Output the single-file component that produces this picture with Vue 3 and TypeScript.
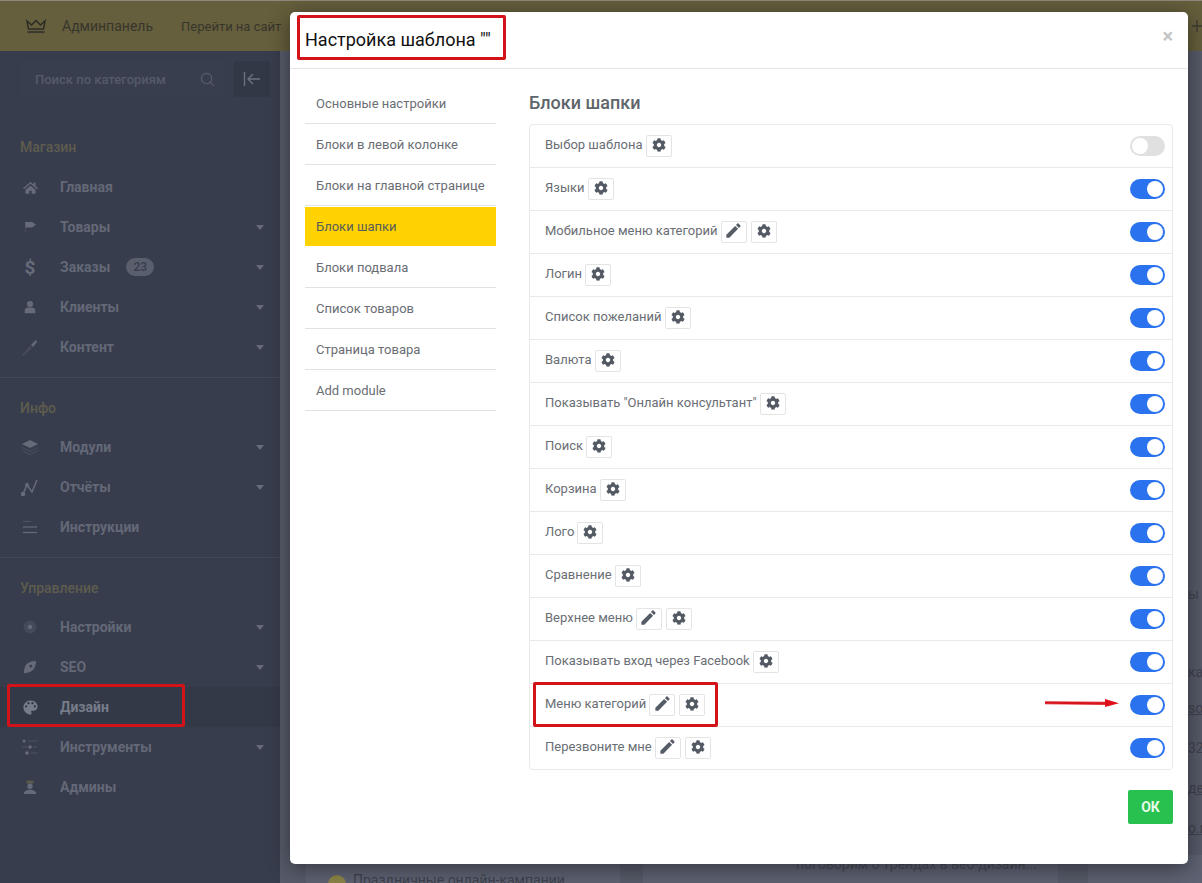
<script setup lang="ts">
interface NavItem { label: string; icon: string; caret?: boolean; badge?: string; active?: boolean }
interface NavGroup { title: string; items: NavItem[] }
interface Row { label: string; edit?: boolean; on: boolean }

const groups: NavGroup[] = [
  { title: 'Магазин', items: [
    { label: 'Главная', icon: 'home' },
    { label: 'Товары', icon: 'flag', caret: true },
    { label: 'Заказы', icon: 'dollar', caret: true, badge: '23' },
    { label: 'Клиенты', icon: 'user', caret: true },
    { label: 'Контент', icon: 'pen', caret: true },
  ] },
  { title: 'Инфо', items: [
    { label: 'Модули', icon: 'layers', caret: true },
    { label: 'Отчёты', icon: 'chart', caret: true },
    { label: 'Инструкции', icon: 'bars' },
  ] },
  { title: 'Управление', items: [
    { label: 'Настройки', icon: 'gear', caret: true },
    { label: 'SEO', icon: 'tag', caret: true },
    { label: 'Дизайн', icon: 'palette', active: true },
    { label: 'Инструменты', icon: 'tools', caret: true },
    { label: 'Админы', icon: 'admin' },
  ] },
]

const tabs = ['Основные настройки', 'Блоки в левой колонке', 'Блоки на главной странице', 'Блоки шапки', 'Блоки подвала', 'Список товаров', 'Страница товара', 'Add module']

const rows: Row[] = [
  { label: 'Выбор шаблона', on: false },
  { label: 'Языки', on: true },
  { label: 'Мобильное меню категорий', edit: true, on: true },
  { label: 'Логин', on: true },
  { label: 'Список пожеланий', on: true },
  { label: 'Валюта', on: true },
  { label: 'Показывать "Онлайн консультант"', on: true },
  { label: 'Поиск', on: true },
  { label: 'Корзина', on: true },
  { label: 'Лого', on: true },
  { label: 'Сравнение', on: true },
  { label: 'Верхнее меню', edit: true, on: true },
  { label: 'Показывать вход через Facebook', on: true },
  { label: 'Меню категорий', edit: true, on: true },
  { label: 'Перезвоните мне', edit: true, on: true },
]

const gearPath = 'M487.4 315.7l-42.6-24.6c4.3-23.2 4.3-47 0-70.2l42.6-24.6c4.9-2.8 7.1-8.6 5.5-14-11.1-35.6-30-67.8-54.7-94.6-3.8-4.1-10-5.1-14.8-2.3L380.8 110c-17.9-15.4-38.5-27.3-60.8-35.1V25.8c0-5.6-3.9-10.5-9.4-11.7-36.7-8.2-74.3-7.8-109.2 0-5.5 1.2-9.4 6.1-9.4 11.7V75c-22.2 7.9-42.8 19.8-60.8 35.1L88.7 85.5c-4.9-2.8-11-1.9-14.8 2.3-24.7 26.7-43.6 58.9-54.7 94.6-1.7 5.4.6 11.2 5.5 14L67.3 221c-4.3 23.2-4.3 47 0 70.2l-42.6 24.6c-4.9 2.8-7.1 8.6-5.5 14 11.1 35.6 30 67.8 54.7 94.6 3.8 4.1 10 5.1 14.8 2.3l42.6-24.6c17.9 15.4 38.5 27.3 60.8 35.1v49.2c0 5.6 3.9 10.5 9.4 11.7 36.7 8.2 74.3 7.8 109.2 0 5.5-1.2 9.4-6.1 9.4-11.7v-49.2c22.2-7.9 42.8-19.8 60.8-35.1l42.6 24.6c4.9 2.8 11 1.9 14.8-2.3 24.7-26.7 43.6-58.9 54.7-94.6 1.5-5.5-.7-11.3-5.6-14.1zM256 336c-44.1 0-80-35.9-80-80s35.9-80 80-80 80 35.9 80 80-35.9 80-80 80z'
const penPath = 'M3 17.25V21h3.75L17.81 9.94l-3.75-3.75L3 17.25zM20.71 7.04a1 1 0 0 0 0-1.41l-2.34-2.34a1 1 0 0 0-1.41 0l-1.83 1.83 3.75 3.75 1.83-1.83z'
</script>

<template>
  <div class="page">
    <header class="topbar">
      <svg class="crown" viewBox="0 0 20 14" width="20" height="14" fill="none" stroke="#2c2c28" stroke-width="1.5">
        <path d="M1 2l4.5 4L10 1.5 14.500 6 19 2l-1.500 8h-15z" />
        <path d="M1.500 13h17" />
      </svg>
      <span class="brand">Админпанель</span>
      <span class="toplink">Перейти на сайт</span>
      <svg class="plus" viewBox="0 0 12 12" width="12" height="12" fill="none" stroke="#3d3c30" stroke-width="1.4">
        <path d="M5 0v12M0 6h12" />
      </svg>
    </header>

    <div class="body">
      <aside class="sidebar">
        <div class="searchrow">
          <div class="search">
            <span>Поиск по категориям</span>
            <svg viewBox="0 0 16 16" width="15" height="15" fill="none" stroke="#585d6c" stroke-width="1.200">
              <circle cx="7" cy="7" r="5.500" />
              <path d="M11 11l4 4" />
            </svg>
          </div>
          <div class="collapse">
            <svg viewBox="0 0 18 16" width="18" height="16" fill="none" stroke="#6c7180" stroke-width="1.400">
              <path d="M1.500 1v14M17 8H5M10 3L5 8l5 5" />
            </svg>
          </div>
        </div>

        <section v-for="(g, gi) in groups" :key="g.title" class="group" :class="{ last: gi === groups.length - 1 }">
          <h4 class="gtitle">{{ g.title }}</h4>
          <div v-for="it in g.items" :key="it.label" class="nav" :class="{ active: it.active }">
            <span class="ico">
              <svg v-if="it.icon === 'home'" viewBox="0 0 24 24" width="15" height="15" fill="#666b7a"><path d="M12 3L0 13l1.500 1.800L12 6l10.500 8.800L24 13l-4-3.300V4h-3v3.200zM4 15.500V22h6v-5h4v5h6v-6.500L12 9z" /></svg>
              <svg v-else-if="it.icon === 'flag'" viewBox="0 0 16 16" width="16" height="16"><path d="M3 3h7l4 2.500L10 8.500H4.500L3.500 9z" fill="#666b7a" /><path d="M3.500 9v5" stroke="#454a5a" fill="none" /></svg>
              <span v-else-if="it.icon === 'dollar'" class="dollar">$</span>
              <svg v-else-if="it.icon === 'user'" viewBox="0 0 16 16" width="14" height="14" fill="#666b7a"><circle cx="8" cy="4.500" r="3.500" /><path d="M2 15v-3c0-2 1.500-3.500 3.500-3.500h5c2 0 3.500 1.500 3.500 3.500v3z" /></svg>
              <svg v-else-if="it.icon === 'pen'" viewBox="0 0 18 18" width="18" height="18"><path d="M1 17l8-9 2 2-9 8z" fill="#474c5b" /><path d="M10 7l5-5 1 2-4 5z" fill="#666b7a" /></svg>
              <svg v-else-if="it.icon === 'layers'" viewBox="0 0 18 16" width="18" height="16"><path d="M9 1l8 4-8 4-8-4z" fill="#666b7a" /><path d="M1 8.500l8 4 8-4M1 11.500l8 4 8-4" fill="none" stroke="#4b5060" /></svg>
              <svg v-else-if="it.icon === 'chart'" viewBox="0 0 18 18" width="18" height="18" fill="none" stroke="#666b7a" stroke-width="1.500"><path d="M2 16l4-9 5 7 5-12" /><circle cx="2" cy="16" r="1.500" fill="#666b7a" /><circle cx="6" cy="7" r="1.200" fill="#666b7a" /></svg>
              <svg v-else-if="it.icon === 'bars'" viewBox="0 0 16 14" width="16" height="14" fill="none" stroke-width="1.200"><path d="M1 1.500h8" stroke="#4d5261" /><path d="M1 7h14" stroke="#666b7a" /><path d="M1 12.500h14" stroke="#666b7a" /></svg>
              <svg v-else-if="it.icon === 'gear'" viewBox="0 0 16 16" width="16" height="16"><circle cx="8" cy="8" r="6.500" fill="#454a5a" /><circle cx="8" cy="8" r="2.200" fill="#666b7a" /></svg>
              <svg v-else-if="it.icon === 'tag'" viewBox="0 0 16 16" width="14" height="14"><path d="M15 1c-6 0-10 2-12 5-1 2-2 6-2 9 3 0 7-1 9-2.500C13 10 15 6 15 1z" fill="#666b7a" /><circle cx="9" cy="7" r="1.500" fill="#383d4d" /></svg>
              <svg v-else-if="it.icon === 'palette'" viewBox="0 0 24 24" width="19" height="19" fill="#777c8a"><path d="M12 3a9 9 0 0 0 0 18c.83 0 1.500-.67 1.500-1.500 0-.39-.15-.74-.39-1.010-.23-.26-.38-.61-.38-.99 0-.83.67-1.500 1.500-1.500H16c2.760 0 5-2.240 5-5 0-4.420-4.030-8-9-8zm-5.500 9a1.500 1.500 0 1 1 0-3 1.500 1.500 0 0 1 0 3zm3-4a1.500 1.500 0 1 1 0-3 1.500 1.500 0 0 1 0 3zm5 0a1.500 1.500 0 1 1 0-3 1.500 1.500 0 0 1 0 3zm3 4a1.500 1.500 0 1 1 0-3 1.500 1.500 0 0 1 0 3z" /></svg>
              <svg v-else-if="it.icon === 'tools'" viewBox="0 0 18 18" width="18" height="18" fill="#666b7a"><circle cx="3" cy="3" r="1.500" /><circle cx="9" cy="9" r="1.800" /><circle cx="6" cy="15" r="1.800" /><path d="M7 2.500h9v1H7zM1 8.500h5v1H1zM12 8.500h4v1h-4zM10 14.500h6v1h-6z" opacity=".45" /></svg>
              <svg v-else viewBox="0 0 16 18" width="14" height="16"><path d="M4 1l2 1.500L8 1l2 1.500L12 1v4H4z" fill="#5d5c4c" /><circle cx="8" cy="8" r="3" fill="#666b7a" /><path d="M1 17c0-3 3-5 7-5s7 2 7 5z" fill="#666b7a" /></svg>
            </span>
            <span class="navlabel">{{ it.label }}</span>
            <span v-if="it.badge" class="badge">{{ it.badge }}</span>
            <span v-if="it.caret" class="caret"></span>
          </div>
        </section>
      </aside>

      <main class="content">
        <div class="bgcards">
          <div class="bgleft">
            <span class="dot"></span>
            <span class="bgline">Праздничные онлайн-кампании</span>
          </div>
          <div class="bgright">поговорим о трендах в веб-дизайн...</div>
          <div class="bgthird"></div>
        </div>
        <div class="edge">
          <span class="e0">ы</span><span class="e1">ка</span><u>so</u><span>32</span><u>де</u><u>o.r</u>
        </div>
      </main>
    </div>

    <div class="modal">
      <div class="mhead">
        <h2>Настройка шаблона ""</h2>
        <span class="close">×</span>
      </div>
      <div class="mbody">
        <nav class="tabs">
          <a v-for="(t, i) in tabs" :key="t" class="tab" :class="{ current: i === 3 }">{{ t }}</a>
        </nav>
        <div class="panel">
          <h3>Блоки шапки</h3>
          <div class="list">
            <div v-for="r in rows" :key="r.label" class="row">
              <span class="rlabel">{{ r.label }}</span>
              <button v-if="r.edit" class="ibtn" type="button">
                <svg viewBox="0 0 24 24" width="19" height="19" fill="#565c66"><path :d="penPath" /></svg>
              </button>
              <button class="ibtn" type="button">
                <svg viewBox="0 0 512 512" width="14" height="14" fill="#535a63"><path :d="gearPath" /></svg>
              </button>
              <span class="switch" :class="{ on: r.on }"><i></i></span>
            </div>
          </div>
          <div class="foot"><button class="ok" type="button">ОК</button></div>
        </div>
      </div>
    </div>

    <i class="mark m1"></i>
    <i class="mark m2"></i>
    <i class="mark m3"></i>
    <svg class="arrow" viewBox="0 0 75 10" width="75" height="10">
      <path d="M0 3.800L61 4.200V6.400L0 5.800z" fill="#d8141c" stroke="#d8141c" stroke-width=".8" />
      <path d="M60 1l14 4.200L60 9z" fill="#e0101a" />
    </svg>
  </div>
</template>

<style>
html, body { margin: 0; background: #5c6070; }
</style>

<style scoped>
.page { position: relative; width: 1202px; height: 883px; overflow: hidden; font-family: Roboto, "Noto Sans", sans-serif; background: #5e6272; }
.topbar { height: 50px; border-top: 1px solid #8d8a7c; background: #665f3d; display: flex; align-items: center; padding-left: 26px; color: #37362c; font-size: 14px; box-sizing: content-box; }
.crown { margin-right: 16px; }
.brand { margin-right: 28px; }
.toplink { font-size: 13px; }
.plus { margin-left: auto; margin-right: -2px; flex: none; }
.body { display: flex; height: 832px; }
.sidebar { width: 280px; background: #383d4d; flex: none; }
.searchrow { display: flex; align-items: center; padding: 0 10px 10px 20px; height: 66px; box-sizing: border-box; }
.search { width: 206px; height: 36px; background: #393e4e; display: flex; align-items: center; justify-content: space-between; padding: 0 11px 0 15px; box-sizing: border-box; font-size: 13px; font-weight: 500; color: #555a69; margin-right: 8px; }
.collapse { width: 36px; height: 36px; border-radius: 3px; background: #333847; display: flex; align-items: center; justify-content: center; }
.group { padding: 10px 0 10px; border-bottom: 1px solid #424757; }
.group.last { border-bottom: 0; }
.gtitle { margin: 0; font-size: 14px; line-height: 40px; height: 39px; font-weight: 500; color: #5e5c4e; padding-left: 20px; }
.group:first-of-type .gtitle { height: 40px; }
.nav { height: 40px; display: flex; align-items: center; font-size: 14px; font-weight: 700; color: #636877; position: relative; }
.nav.active { background: #343947; color: #777c8a; }
.ico { width: 60px; display: flex; justify-content: center; flex: none; }
.dollar { font-size: 19px; font-weight: 700; color: #666b7a; line-height: 19px; }
.badge { margin-left: 16px; background: #5a5f6e; color: #383d4d; border-radius: 9px; width: 28px; height: 18px; font-size: 12px; font-weight: 500; line-height: 18px; text-align: center; }
.caret { position: absolute; left: 256px; top: 18px; border: 4px solid transparent; border-top: 5px solid #666b7a; border-bottom: 0; }
.content { flex: 1; position: relative; overflow: hidden; color: #3f424e; font-size: 14px; background: #575b6a; }
.bgcards { display: flex; height: 100%; padding-left: 26px; box-sizing: border-box; align-items: flex-end; }
.bgleft { width: 314px; height: 20px; background: #5e6272; display: flex; align-items: flex-start; gap: 7px; padding-left: 22px; box-sizing: border-box; white-space: nowrap; overflow: hidden; flex: none; }
.dot { width: 18px; height: 18px; border-radius: 50%; background: #8c8648; flex: none; margin-top: 12px; }
.bgline { line-height: 16px; height: 12px; margin-top: 9px; overflow: hidden; }
.bgright { margin-left: 23px; width: 415px; height: 28px; background: #5e6272; padding-left: 153px; box-sizing: border-box; line-height: 18px; white-space: nowrap; flex: none; color: #464a56; }
.bgthird { margin-left: 30px; flex: 1; height: 28px; background: #5e6272; }
.edge { position: absolute; right: 0; bottom: 46px; width: 14px; display: flex; flex-direction: column; gap: 22px; line-height: 18px; white-space: nowrap; overflow: hidden; }
.e0 { margin-bottom: 38px; }
.e1 { margin-bottom: -4px; }
.modal { position: absolute; left: 290px; top: 12px; width: 898px; height: 852px; background: #fff; border-radius: 5px; box-shadow: 0 4px 22px rgba(0, 0, 0, .45); display: flex; flex-direction: column; }
.mhead { border-bottom: 1px solid #e6e6e6; display: flex; align-items: center; justify-content: space-between; padding: 0 15px 2px; flex: none; box-sizing: content-box; height: 54px; }
.mhead h2 { margin: 0; font-size: 18px; font-weight: 400; color: #111; }
.close { font-size: 20px; font-weight: 700; color: #c4c4c4; margin-top: -6px; }
.mbody { display: flex; padding: 14px 15px 0 15px; }
.tabs { width: 191px; flex: none; display: flex; flex-direction: column; margin-right: 33px; }
.tab { height: 41px; box-sizing: border-box; border-bottom: 1px solid #e2e2e2; padding-left: 11px; line-height: 42px; font-size: 13px; color: #6a6e74; }
.tab.current { background: #ffd200; border-bottom: 0; height: 39px; margin-top: 1px; line-height: 40px; color: #5a5c58; }
.tab.current + .tab { height: 42px; line-height: 44px; }
.panel { flex: 1; min-width: 0; }
.panel h3 { margin: 0; height: 41px; line-height: 39px; font-size: 18px; font-weight: 500; color: #5f666b; }
.list { border: 1px solid #e9e9e9; border-radius: 4px; }
.row { height: 43px; box-sizing: border-box; border-bottom: 1px solid #e9e9e9; display: flex; align-items: center; padding: 0 7px 0 15px; font-size: 13px; color: #6a6e74; }
.row:last-child { border-bottom: 0; height: 42px; }
.rlabel { margin-right: 3px; padding-bottom: 3px; }
.ibtn { width: 26px; height: 22px; padding: 0 0 3px; margin: 0 4px 0 0; border: 1px solid #e4e4e4; border-radius: 2px; background: #fff; display: flex; align-items: center; justify-content: center; box-sizing: border-box; }
.switch { margin-left: auto; width: 35px; height: 20px; border-radius: 10px; background: #e0e0e0; position: relative; display: block; }
.switch i { position: absolute; left: 2px; top: 2px; width: 16px; height: 16px; border-radius: 50%; background: #fff; }
.switch.on { background: #2a72ee; }
.switch.on i { left: 17px; }
.foot { display: flex; justify-content: flex-end; margin-top: 20px; }
.ok { width: 45px; height: 34px; border: 0; border-radius: 2px; background: #28c04f; color: #e6fbe9; font-family: inherit; font-size: 14px; font-weight: 700; padding: 0; }
.mark { position: absolute; display: block; box-sizing: border-box; border: 3px solid #d2131a; border-radius: 2px; }
.m1 { left: 297px; top: 15px; width: 209px; height: 45px; }
.m2 { left: 7px; top: 684px; width: 178px; height: 43px; }
.m3 { left: 533px; top: 682px; width: 185px; height: 45px; }
.arrow { position: absolute; left: 1045px; top: 698px; }
</style>
